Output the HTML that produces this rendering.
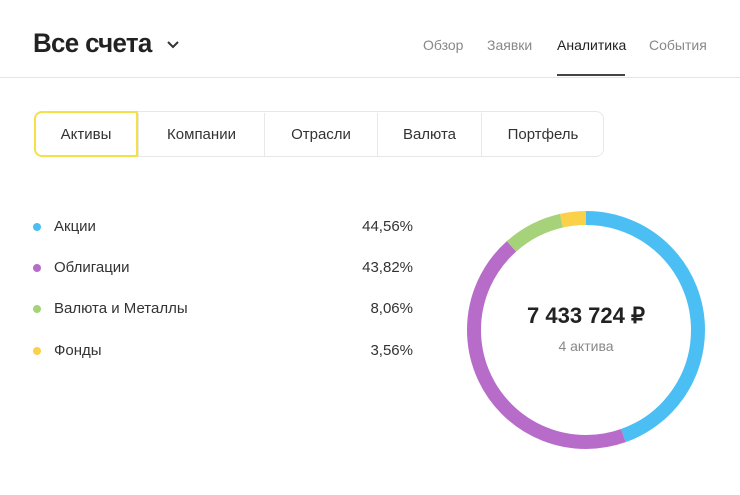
<!DOCTYPE html>
<html><head><meta charset="utf-8"><style>
*{margin:0;padding:0;box-sizing:border-box}
body{width:740px;height:495px;background:#fff;font-family:"Liberation Sans","Noto Sans CJK SC",sans-serif;position:relative;overflow:hidden;color:#222}
.t{position:absolute;white-space:nowrap}
.nav{font-size:14px;color:#888;top:37px}
.tabs{position:absolute;left:34px;top:111px;width:570px;height:46px;border:1px solid #e8e8e8;border-radius:8px}
.tab{position:absolute;top:0;height:44px;line-height:44px;text-align:center;font-size:15px;color:#333;border-left:1px solid #e8e8e8}
.dot{position:absolute;left:33px;width:8px;height:8px;border-radius:50%}
.lbl{font-size:15px;color:#333;left:54px}
.pct{font-size:15px;color:#333;right:327px}
</style></head><body>
<div class="t" style="left:33px;top:28px;font-size:27px;font-weight:bold;color:#222;letter-spacing:-0.7px;transform:scaleX(0.96);transform-origin:left">Все счета</div>
<svg style="position:absolute;left:166px;top:40px" width="14" height="10"><path d="M2 2 L7 7 L12 2" fill="none" stroke="#333" stroke-width="2"/></svg>
<div class="t nav" style="left:423px">Обзор</div>
<div class="t nav" style="left:487px">Заявки</div>
<div class="t nav" style="left:557px;color:#222">Аналитика</div>
<div class="t nav" style="left:649px">События</div>
<div style="position:absolute;left:557px;top:74px;width:68px;height:2px;background:#444"></div>
<div style="position:absolute;left:0;top:77px;width:740px;height:1px;background:#e4e4e4"></div>
<div class="tabs">
<div class="tab" style="left:103px;width:126px;top:1px">Компании</div>
<div class="tab" style="left:229px;width:113px;top:1px">Отрасли</div>
<div class="tab" style="left:342px;width:104px;top:1px">Валюта</div>
<div class="tab" style="left:446px;width:123px;top:1px">Портфель</div>
<div class="tab" style="left:-1px;top:-1px;width:104px;height:46px;line-height:44px;border:2px solid #f5e04a;border-radius:8px 0 0 8px">Активы</div>
</div>
<div class="dot" style="top:223px;background:#4bbff3"></div><div class="t lbl" style="top:218px">Акции</div><div class="t pct" style="top:218px">44,56%</div>
<div class="dot" style="top:264px;background:#b86cc9"></div><div class="t lbl" style="top:259px">Облигации</div><div class="t pct" style="top:259px">43,82%</div>
<div class="dot" style="top:305px;background:#a6d279"></div><div class="t lbl" style="top:300px">Валюта и Металлы</div><div class="t pct" style="top:300px">8,06%</div>
<div class="dot" style="top:347px;background:#fbd149"></div><div class="t lbl" style="top:342px">Фонды</div><div class="t pct" style="top:342px">3,56%</div>
<svg style="position:absolute;left:466px;top:210px" width="240" height="240" viewBox="0 0 240 240">
<g transform="rotate(-90 120 120)" fill="none" stroke-width="14">
<circle cx="120" cy="120" r="112" stroke="#4bbff3" stroke-dasharray="313.6 800" stroke-dashoffset="0"/>
<circle cx="120" cy="120" r="112" stroke="#b86cc9" stroke-dasharray="308.4 800" stroke-dashoffset="-313.6"/>
<circle cx="120" cy="120" r="112" stroke="#a6d279" stroke-dasharray="56.7 800" stroke-dashoffset="-622"/>
<circle cx="120" cy="120" r="112" stroke="#fbd149" stroke-dasharray="25.1 800" stroke-dashoffset="-678.7"/>
</g></svg>
<div class="t" style="left:466px;width:240px;text-align:center;top:303px;font-size:22px;font-weight:bold;color:#222">7 433 724 ₽</div>
<div class="t" style="left:466px;width:240px;text-align:center;top:338px;font-size:14px;color:#888">4 актива</div>
</body></html>
